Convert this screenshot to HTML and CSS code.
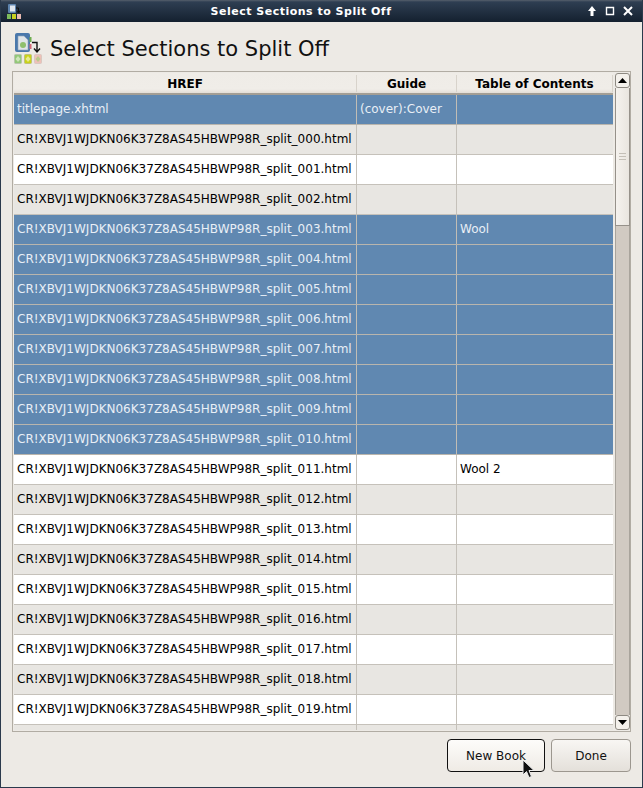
FILE: index.html
```html
<!DOCTYPE html>
<html lang="en">
<head>
<meta charset="utf-8">
<title>Select Sections to Split Off</title>
<link rel="stylesheet" href="styles.css">
</head>
<body>
<div class="window">
  <header class="titlebar">
    <svg class="title-icon" viewBox="0 0 16 16" width="16" height="16">
      <rect x="2" y="1" width="8" height="9" rx="1" fill="#5d83ad"/><rect x="4" y="2.500" width="5" height="6" fill="#dfe6ee"/>
      <path d="M10 5h2.500v4.500m-1.500-1.500 1.500 2 1.500-2" stroke="#111" fill="none"/>
      <rect x="1" y="11" width="4" height="5" fill="#7dbb5a"/><rect x="6" y="11" width="4" height="5" fill="#c8d020"/><rect x="11" y="11" width="4" height="5" fill="#e8b9b0"/>
    </svg>
    <div class="title-text">Select Sections to Split Off</div>
    <div class="title-buttons">
      <svg viewBox="0 0 12 12" width="12" height="12"><path d="M6 1 2 6h2.500v5h3V6H10z" fill="#fff"/></svg>
      <svg viewBox="0 0 12 12" width="12" height="12"><path d="M2.500 2.500h7v7h-7z" fill="none" stroke="#fff" stroke-width="1.400"/></svg>
      <svg viewBox="0 0 12 12" width="12" height="12"><path d="M2 2l8 8M10 2l-8 8" stroke="#fff" stroke-width="2"/></svg>
    </div>
  </header>
  <main class="content">
    <div class="heading">
      <svg class="heading-icon" viewBox="0 0 32 32" width="32" height="32">
        <rect x="2" y="0" width="15" height="19" rx="2" fill="#4a78ab"/>
        <rect x="16.500" y="4" width="2" height="5" fill="#6fae4e"/><rect x="16.500" y="11" width="2" height="5" fill="#d66a78"/>
        <path d="M5 3h6l4 4v10H5z" fill="#dfe4e8" stroke="#8ea3b8" stroke-width=".6"/>
        <circle cx="10" cy="12" r="3" fill="#8fbf6c"/>
        <path d="M19 9.500h5v9m-3-3 3 3.500 3-3.500" stroke="#111" stroke-width="1.400" fill="none"/>
        <rect x="1.500" y="21.500" width="7" height="9" rx="1" fill="#93c878" stroke="#b9c4ae"/><path d="M5 23l2.500 3-2.500 3-2.500-3z" fill="#cfe6bb"/>
        <rect x="11.500" y="21.500" width="7" height="9" rx="1" fill="#c9d21a" stroke="#bfc27a"/><path d="M15 23l2.500 3-2.500 3-2.500-3z" fill="#e8ec90"/>
        <rect x="21.500" y="21.500" width="7" height="9" rx="1" fill="#efc0b8" stroke="#d9c8c0"/><path d="M25 23l2.500 3-2.500 3-2.500-3z" fill="#b9c98c"/>
      </svg>
      <h1 class="heading-text">Select Sections to Split Off</h1>
    </div>
    <section class="frame">
      <div class="table">
        <div class="thead">
          <div class="th col-href">HREF</div>
          <div class="th col-guide">Guide</div>
          <div class="th col-toc">Table of Contents</div>
        </div>
        <div class="tbody">
          <div class="row sel"><div class="td col-href">titlepage.xhtml</div><div class="td col-guide">(cover):Cover</div><div class="td col-toc"></div></div>
          <div class="row alt"><div class="td col-href">CR!XBVJ1WJDKN06K37Z8AS45HBWP98R_split_000.html</div><div class="td col-guide"></div><div class="td col-toc"></div></div>
          <div class="row"><div class="td col-href">CR!XBVJ1WJDKN06K37Z8AS45HBWP98R_split_001.html</div><div class="td col-guide"></div><div class="td col-toc"></div></div>
          <div class="row alt"><div class="td col-href">CR!XBVJ1WJDKN06K37Z8AS45HBWP98R_split_002.html</div><div class="td col-guide"></div><div class="td col-toc"></div></div>
          <div class="row sel"><div class="td col-href">CR!XBVJ1WJDKN06K37Z8AS45HBWP98R_split_003.html</div><div class="td col-guide"></div><div class="td col-toc">Wool</div></div>
          <div class="row sel"><div class="td col-href">CR!XBVJ1WJDKN06K37Z8AS45HBWP98R_split_004.html</div><div class="td col-guide"></div><div class="td col-toc"></div></div>
          <div class="row sel"><div class="td col-href">CR!XBVJ1WJDKN06K37Z8AS45HBWP98R_split_005.html</div><div class="td col-guide"></div><div class="td col-toc"></div></div>
          <div class="row sel"><div class="td col-href">CR!XBVJ1WJDKN06K37Z8AS45HBWP98R_split_006.html</div><div class="td col-guide"></div><div class="td col-toc"></div></div>
          <div class="row sel"><div class="td col-href">CR!XBVJ1WJDKN06K37Z8AS45HBWP98R_split_007.html</div><div class="td col-guide"></div><div class="td col-toc"></div></div>
          <div class="row sel"><div class="td col-href">CR!XBVJ1WJDKN06K37Z8AS45HBWP98R_split_008.html</div><div class="td col-guide"></div><div class="td col-toc"></div></div>
          <div class="row sel"><div class="td col-href">CR!XBVJ1WJDKN06K37Z8AS45HBWP98R_split_009.html</div><div class="td col-guide"></div><div class="td col-toc"></div></div>
          <div class="row sel"><div class="td col-href">CR!XBVJ1WJDKN06K37Z8AS45HBWP98R_split_010.html</div><div class="td col-guide"></div><div class="td col-toc"></div></div>
          <div class="row"><div class="td col-href">CR!XBVJ1WJDKN06K37Z8AS45HBWP98R_split_011.html</div><div class="td col-guide"></div><div class="td col-toc">Wool 2</div></div>
          <div class="row alt"><div class="td col-href">CR!XBVJ1WJDKN06K37Z8AS45HBWP98R_split_012.html</div><div class="td col-guide"></div><div class="td col-toc"></div></div>
          <div class="row"><div class="td col-href">CR!XBVJ1WJDKN06K37Z8AS45HBWP98R_split_013.html</div><div class="td col-guide"></div><div class="td col-toc"></div></div>
          <div class="row alt"><div class="td col-href">CR!XBVJ1WJDKN06K37Z8AS45HBWP98R_split_014.html</div><div class="td col-guide"></div><div class="td col-toc"></div></div>
          <div class="row"><div class="td col-href">CR!XBVJ1WJDKN06K37Z8AS45HBWP98R_split_015.html</div><div class="td col-guide"></div><div class="td col-toc"></div></div>
          <div class="row alt"><div class="td col-href">CR!XBVJ1WJDKN06K37Z8AS45HBWP98R_split_016.html</div><div class="td col-guide"></div><div class="td col-toc"></div></div>
          <div class="row"><div class="td col-href">CR!XBVJ1WJDKN06K37Z8AS45HBWP98R_split_017.html</div><div class="td col-guide"></div><div class="td col-toc"></div></div>
          <div class="row alt"><div class="td col-href">CR!XBVJ1WJDKN06K37Z8AS45HBWP98R_split_018.html</div><div class="td col-guide"></div><div class="td col-toc"></div></div>
          <div class="row"><div class="td col-href">CR!XBVJ1WJDKN06K37Z8AS45HBWP98R_split_019.html</div><div class="td col-guide"></div><div class="td col-toc"></div></div>
          <div class="row alt"><div class="td col-href"></div><div class="td col-guide"></div><div class="td col-toc"></div></div>
        </div>
      </div>
      <div class="scrollbar">
        <div class="sb-btn sb-up"><svg viewBox="0 0 9 5" width="9" height="5"><path d="M4.500 0 9 5H0z" fill="#000"/></svg></div>
        <div class="sb-thumb"><span class="grip"></span><span class="grip"></span><span class="grip"></span></div>
        <div class="sb-track"></div>
        <div class="sb-btn sb-down"><svg viewBox="0 0 9 5" width="9" height="5"><path d="M0 0h9L4.500 5z" fill="#000"/></svg></div>
      </div>
    </section>
    <footer class="actions">
      <button class="btn btn-default">New Book</button>
      <button class="btn">Done</button>
    </footer>
  </main>
  <svg class="cursor" viewBox="0 0 14 20" width="14" height="20">
    <path d="M1 1v15l3.500-3.500 2.500 6 2.500-1-2.500-6H12z" fill="#111" stroke="#eee" stroke-width="1"/>
  </svg>
</div>
</body>
</html>
```
FILE: styles.css
```css
* { box-sizing: border-box; }
html, body { margin: 0; padding: 0; }
body { width: 643px; height: 788px; overflow: hidden; font-family: "DejaVu Sans", sans-serif; color: #000; }
.window { position: relative; width: 643px; height: 788px; display: flex; flex-direction: column; background: #edeae5; border: 1px solid #2b3a4c; border-top: 0; }
.titlebar { flex: none; height: 22px; display: flex; align-items: center; background: linear-gradient(#56606c 0, #2e3e52 2px, #14202f 100%); color: #fff; padding: 0 8px 0 5px; }
.title-icon { flex: none; }
.title-text { flex: 1; text-align: center; font-size: 11px; font-weight: bold; letter-spacing: .5px; padding-right: 6px; }
.title-buttons { flex: none; display: flex; gap: 6px; }
.content { flex: 1; display: flex; flex-direction: column; min-height: 0; padding: 10px 11px 0 11px; }
.heading { flex: none; height: 39px; display: flex; align-items: flex-start; gap: 5px; padding-left: 1px; }
.heading-icon { flex: none; margin-top: 1px; }
.heading-text { margin: 2px 0 0; font-size: 21px; font-weight: normal; line-height: 30px; color: #111; }
.frame { flex: none; height: 661px; display: flex; border: 1px solid #b1aca3; padding: 1px 0 1px 1px; overflow: hidden; }
.table { width: 600px; flex: none; display: flex; flex-direction: column; overflow: hidden; padding-right: 1px; }
.thead { flex: none; height: 22px; display: flex; background: linear-gradient(#efece7, #f0ede8 80%, #e3ded7); border-bottom: 2px solid #a39e95; }
.th { font-size: 12px; font-weight: bold; text-align: center; line-height: 19px; border-right: 1px solid #d8d3cb; margin: 2px 0 0; height: 17px; }
.col-href { width: 343px; flex: none; }
.col-guide { width: 100px; flex: none; }
.col-toc { flex: 1; border-right: 0; }
.thead .col-toc { border-right: 1px solid #d8d3cb; }
.tbody { flex: 1; overflow: hidden; }
.row { height: 30px; display: flex; background: #fff; border-bottom: 1px solid #c5c1ba; }
.row.alt { background: #e8e6e2; }
.row.sel { background: #6088b1; color: #e9eff6; border-bottom-color: #b9b5ad; }
.td { font-size: 12px; line-height: 28px; padding-left: 3px; white-space: nowrap; border-right: 1px solid #c5c1ba; }
.td.col-toc { border-right: 0; }
.row.sel .td { border-right-color: #c1bdb5; }
.scrollbar { width: 15px; flex: none; display: flex; flex-direction: column; margin-left: 1px; }
.sb-btn { flex: none; height: 15px; display: flex; align-items: center; justify-content: center; background: #f4f1ec; border: 1px solid #8e8a83; border-radius: 3px; }
.sb-thumb { flex: none; height: 138px; display: flex; flex-direction: column; align-items: center; justify-content: center; gap: 2px; background: linear-gradient(90deg, #f5f2ee, #e9e5df); border: 1px solid #96918a; border-top: 0; }
.grip { width: 7px; height: 1px; background: #c4bfb7; }
.sb-track { flex: 1; background: #d1cac2; border-left: 1px solid #a9a49c; border-right: 1px solid #a9a49c; }
.actions { flex: 1; display: flex; justify-content: flex-end; align-items: flex-start; gap: 6px; padding: 7px 0 0 0; }
.btn { height: 33px; font-family: "DejaVu Sans", sans-serif; font-size: 12px; color: #111; border: 1px solid #9c978f; border-radius: 4px; background: linear-gradient(#f8f6f3, #e4e0da); padding: 0; width: 80px; }
.btn-default { width: 98px; border-color: #111; background: linear-gradient(#fdfcfa, #efebe5); }
.cursor { position: absolute; left: 521px; top: 759px; }
```
